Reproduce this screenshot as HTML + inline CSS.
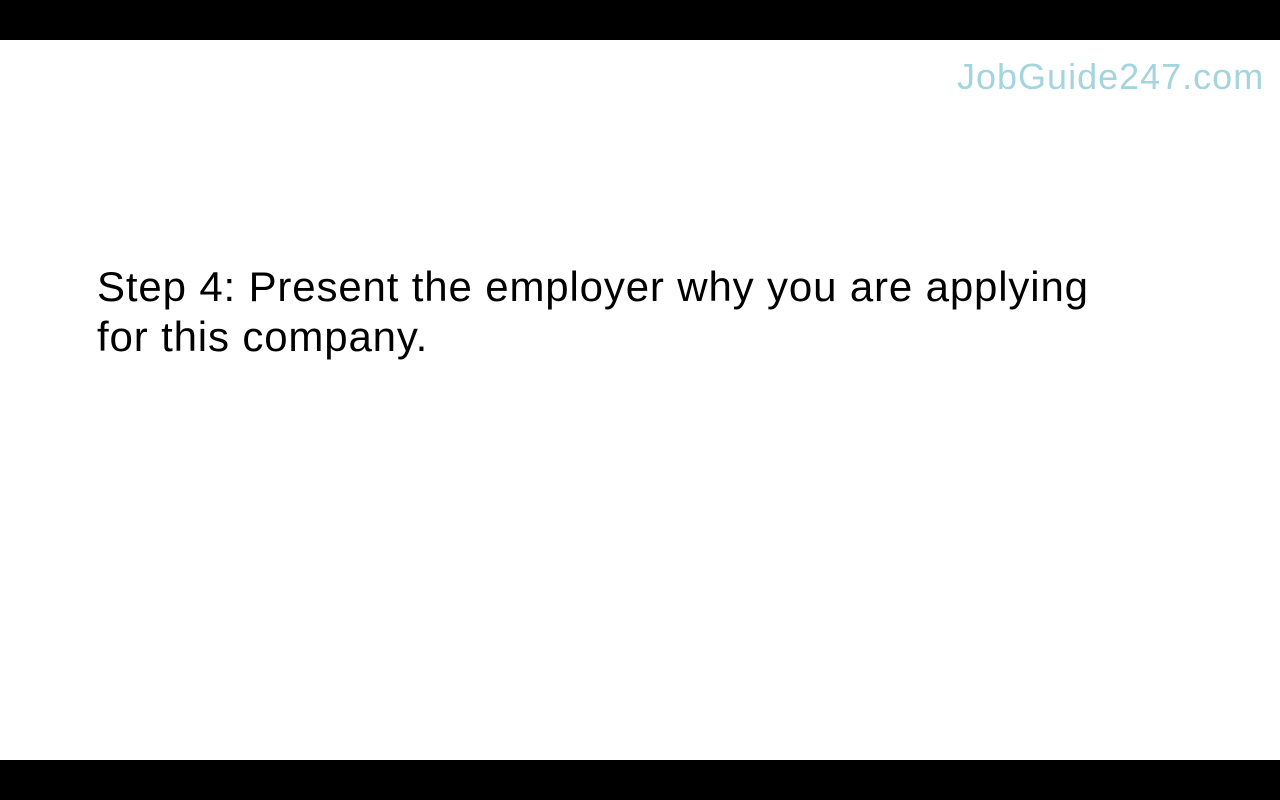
<!DOCTYPE html>
<html><head><style>
html,body{margin:0;padding:0;width:1280px;height:800px;background:#fff;overflow:hidden;position:relative}
.bar{position:absolute;left:0;width:1280px;height:40px;background:#000}
.logo{position:absolute;left:957px;top:56px;font:36px "Liberation Sans",sans-serif;color:#a3d5dd;white-space:nowrap;letter-spacing:1px}
.t{position:absolute;left:97px;top:262px;font:42px/50px "Liberation Sans",sans-serif;color:#000;white-space:nowrap;letter-spacing:0.85px}
</style></head><body>
<div class="bar" style="top:0"></div>
<div class="bar" style="top:760px"></div>
<div class="logo">JobGuide247.com</div>
<div class="t">Step 4: Present the employer why you are applying<br>for this company.</div>
</body></html>
